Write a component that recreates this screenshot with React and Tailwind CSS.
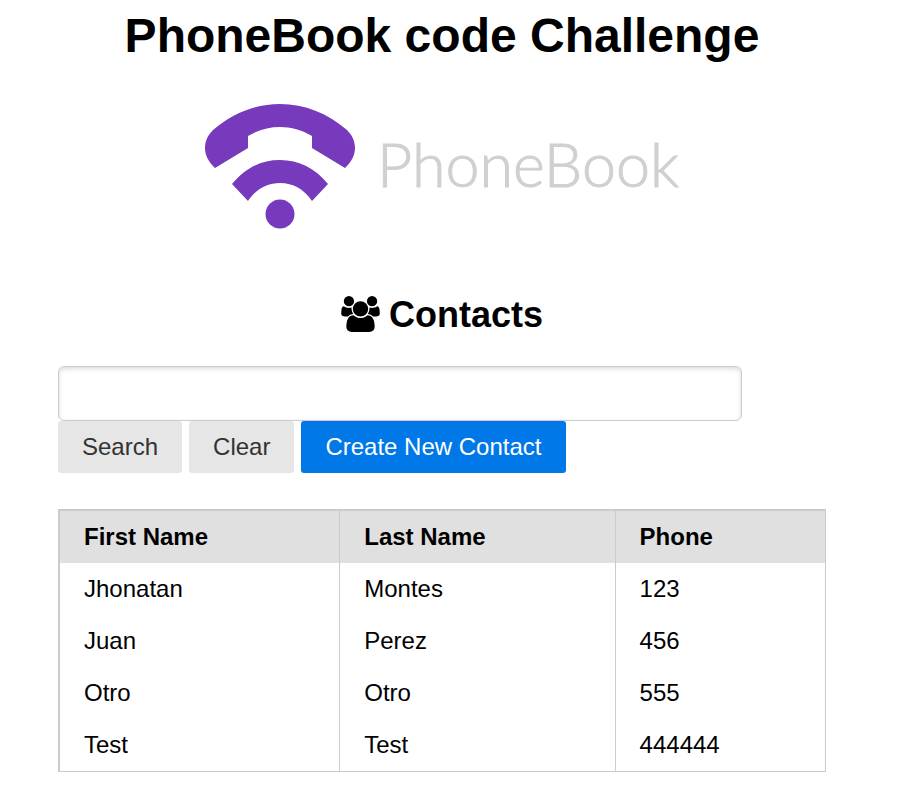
const contacts = [
  { first: "Jhonatan", last: "Montes", phone: "123" },
  { first: "Juan", last: "Perez", phone: "456" },
  { first: "Otro", last: "Otro", phone: "555" },
  { first: "Test", last: "Test", phone: "444444" },
];

function UsersIcon() {
  return (
    <svg viewBox="0 0 1920 1792" className="mb-0.5 h-9 w-[39px]" fill="currentColor" aria-hidden="true">
      <path d="M593 896q-162 5-265 128H194q-82 0-138-40.500T0 865q0-353 124-353 6 0 43.500 21t97.500 42.500T384 597q67 0 133-23-5 37-5 66 0 139 81 256zm1071 637q0 120-73 189.500t-194 69.500H523q-121 0-194-69.500T256 1533q0-53 3.500-103.500t14-109T300 1212t43-97.500 62-81 85.500-53.500T602 960q10 0 43 21.500t73 48 107 48 135 21.500 135-21.500 107-48 73-48 43-21.500q61 0 111.500 20t85.500 53.500 62 81 43 97.500 26.500 108.500 14 109 3.500 103.500zM640 256q0 106-75 181t-181 75-181-75-75-181 75-181T384 0t181 75 75 181zm704 384q0 159-112.500 271.500T960 1024 688.500 911.500 576 640t112.500-271.500T960 256t271.500 112.500T1344 640zm576 225q0 78-56 118.500t-138 40.500h-134q-103-123-265-128 81-117 81-256 0-29-5-66 66 23 133 23 59 0 119-21.500t97.500-42.500 43.500-21q124 0 124 353zm-128-609q0 106-75 181t-181 75-181-75-75-181 75-181 181-75 181 75 75 181z" />
    </svg>
  );
}

function Logo() {
  return (
    <div className="flex items-center justify-center gap-[22px]">
      <svg viewBox="0 0 150 126" className="h-[126px] w-[150px]" fill="#773abc" aria-hidden="true">
        <path d="M10 64C3 57 0 51 0 44C0 37 3 31 8 26C28 9 50 0 75 0C100 0 122 9 142 26C147 31 150 37 150 44C150 51 147 57 140 64L107 44V32C97 26 86 23 75 23C64 23 53 26 43 32V44Z" />
        <path d="M27 80C40 64 56 56 75 56C94 56 110 64 123 80L107 97C99 85 88 79 75 79C62 79 51 85 43 97Z" />
        <circle cx="75" cy="110" r="14.500" />
      </svg>
      <span className="pb-1.5 font-['Lato',sans-serif] text-[61px] leading-[72px] font-light text-[#d0d0d0] [-webkit-text-stroke:1px_#d0d0d0]">PhoneBook</span>
    </div>
  );
}

export default function App() {
  return (
    <main className="bg-white pr-[74px] pl-[58px] font-['Liberation_Sans',Arial,sans-serif] text-2xl leading-7 text-black">
      <h1 className="pt-[9px] text-center text-5xl leading-[54px] font-bold">PhoneBook code Challenge</h1>
      <div className="pt-[41px]">
        <Logo />
      </div>
      <h2 className="mt-[65px] flex items-center justify-center gap-[9px] text-4xl leading-10 font-bold">
        <UsersIcon />
        Contacts
      </h2>
      <form className="mt-[31px]" onSubmit={(e) => e.preventDefault()}>
        <input
          type="text"
          aria-label="Search contacts"
          className="block h-[55px] w-[89%] rounded-md border border-[#ccc] bg-white px-4 shadow-[inset_0_2px_5px_#ddd] outline-none"
        />
        <div className="flex gap-[7px]">
          <button type="submit" className="rounded-[3px] bg-[#e6e6e6] px-6 py-3 text-[#333]">Search</button>
          <button type="reset" className="rounded-[3px] bg-[#e6e6e6] px-6 py-3 text-[#333]">Clear</button>
          <button type="button" className="rounded-[3px] bg-[#0078e7] px-6 py-3 text-white">Create New Contact</button>
        </div>
      </form>
      <table className="mt-9 mb-5 w-full table-fixed border-separate border-spacing-0 border border-t-2 border-l-2 border-[#cbcbcb] text-left">
        <colgroup>
          <col className="w-[36.5%]" />
          <col className="w-[36%]" />
          <col />
        </colgroup>
        <thead className="bg-[#e0e0e0]">
          <tr>
            <th scope="col" className="px-6 py-3 font-bold">First Name</th>
            <th scope="col" className="border-l border-[#cbcbcb] px-6 py-3 font-bold">Last Name</th>
            <th scope="col" className="border-l border-[#cbcbcb] px-6 py-3 font-bold">Phone</th>
          </tr>
        </thead>
        <tbody>
          {contacts.map((c) => (
            <tr key={c.phone}>
              <td className="px-6 py-3">{c.first}</td>
              <td className="border-l border-[#cbcbcb] px-6 py-3">{c.last}</td>
              <td className="border-l border-[#cbcbcb] px-6 py-3">{c.phone}</td>
            </tr>
          ))}
        </tbody>
      </table>
    </main>
  );
}
